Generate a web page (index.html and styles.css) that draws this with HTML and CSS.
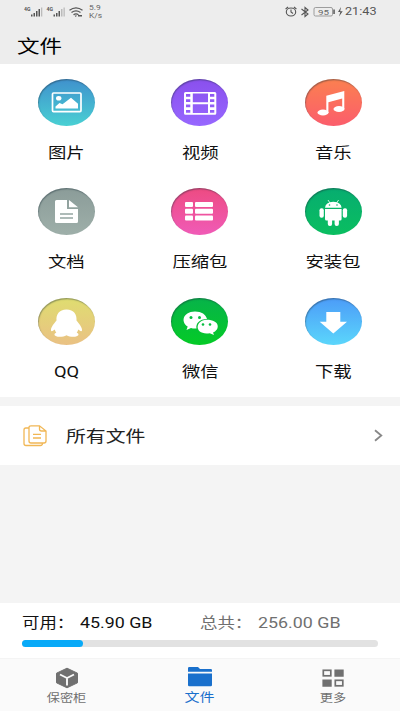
FILE: index.html
```html
<!DOCTYPE html>
<html lang="zh-CN">
<head>
<meta charset="utf-8">
<title>文件</title>
<link rel="stylesheet" href="styles.css">
</head>
<body>
<header class="header">
  <div class="status">
    <svg class="status-left" width="60" height="16" viewBox="0 0 60 16">
      <g fill="#555">
        <text x="0" y="6" class="net" textLength="6.500" lengthAdjust="spacingAndGlyphs">4G</text><text x="22.5" y="6" class="net" textLength="6.500" lengthAdjust="spacingAndGlyphs">4G</text>
        <path d="M7 9.500h1.500v2H7zM9.500 8h1.500v3.500H9.500zM12 6h1.500v5.500H12zM14.500 4h1.500v7.500h-1.500z"/>
        <path d="M29.500 9.500h1.500v2h-1.500zM32 8h1.500v3.500H32zM34.500 6h1.500v5.500h-1.500z"/>
        <path fill="#bbb" d="M17 2.500h1.300v9H17zM37 4h1.500v7.500H37zM39.500 2.500h1.300v9h-1.300z"/>
      </g>
      <g fill="none" stroke="#555" stroke-width="1.200"><path d="M45.500 5.200q6.500-4.800 13 0M47.500 7.500q4.500-3.200 9 0M49.500 9.700q2.500-1.700 5 0"/></g>
      <path fill="#555" d="M50.500 10.500h2.500l-1.200 1.500zM54 10h4v1.500h-4z"/>
    </svg>
    <div class="speed"><span>5.9</span><span>K/s</span></div>
    <svg class="status-right" width="60" height="16" viewBox="0 0 60 16">
      <g fill="none" stroke="#555" stroke-width="1.100">
        <ellipse cx="6" cy="8" rx="4.700" ry="4"/><path d="M6 5.500V8l2 1.500M.6 5l2.500-2M11.400 5L8.900 3"/>
        <path d="M16.500 5l6.500 5-3 2.500v-9L23 6l-6.500 5"/>
        <rect x="29" y="3.500" width="18.500" height="8.500" rx="1.500" stroke="#888" stroke-width=".8"/>
      </g>
      <path fill="#555" d="M48.300 5.500h1.500v4.500h-1.500zM56 3l-3 5h2.300L54 12.500l3.700-5.300h-2.500z"/>
      <text x="33" y="10.500" class="battery" textLength="11" lengthAdjust="spacingAndGlyphs">95</text>
    </svg>
    <span class="clock">21:43</span>
  </div>
  <h1 class="title">文件</h1>
</header>

<main>
  <section class="grid">
    <div class="cell">
      <div class="disc image"><svg width="57" height="47" viewBox="0 0 57 47">
        <rect x="14.500" y="14" width="28.500" height="18.600" rx="1" fill="none" stroke="#fff" stroke-width="1.700"/>
        <ellipse cx="20.700" cy="19.300" rx="2.700" ry="2.300" fill="#fff"/><path fill="#fff" d="M17.500 29.500v-2l4-3.500 3 1.300 8.500-6.500 7 6v4.700z"/></svg></div>
      <span class="label">图片</span>
    </div>
    <div class="cell">
      <div class="disc video"><svg width="57" height="47" viewBox="0 0 57 47">
        <path fill="#fff" fill-rule="evenodd" d="M14.500 13h29.300q1.500 0 1.500 1.500v19.800q0 1.500-1.500 1.500H14.500q-1.500 0-1.500-1.500V14.500q0-1.500 1.500-1.500zM21.800 14.500v8.800H37v-8.800zM21.800 25.200v8.700H37v-8.700zM15 15v2.700h4.300V15zM15 20.300V23h4.300v-2.700zM15 25.600v2.700h4.300v-2.700zM15 31v2.700h4.300V31zM39 15v2.700h4.300V15zM39 20.300V23h4.300v-2.700zM39 25.600v2.700h4.300v-2.700zM39 31v2.700h4.300V31z"/></svg></div>
      <span class="label">视频</span>
    </div>
    <div class="cell">
      <div class="disc music"><svg width="57" height="47" viewBox="0 0 57 47">
        <path fill="#fff" d="M21.300 16.700l18-4.700v18h-2.100V19.600l-13.800 3.600V34h-2.100z"/><ellipse cx="18" cy="33.500" rx="5.500" ry="3" fill="#fff"/><ellipse cx="34" cy="30" rx="5.500" ry="3" fill="#fff"/></svg></div>
      <span class="label">音乐</span>
    </div>
    <div class="cell">
      <div class="disc document"><svg width="57" height="47" viewBox="0 0 57 47">
        <path fill="#fff" d="M18.500 12H29v9h11v12.500q0 1.500-1.500 1.500h-20Q17 35 17 33.500v-20q0-1.500 1.500-1.500zM31 12l9 7.300h-9z"/><path stroke="#94a5a1" stroke-width="1.300" d="M22 26h13M22 30h13"/></svg></div>
      <span class="label">文档</span>
    </div>
    <div class="cell">
      <div class="disc archive"><svg width="57" height="47" viewBox="0 0 57 47">
        <g fill="#fff"><rect x="14" y="14" width="8" height="5" rx="1"/><rect x="24" y="14" width="18" height="5" rx="1"/><rect x="14" y="20.700" width="8" height="5" rx="1"/><rect x="24" y="20.700" width="18" height="5" rx="1"/><rect x="14" y="27.400" width="8" height="5" rx="1"/><rect x="24" y="27.400" width="18" height="5" rx="1"/></g></svg></div>
      <span class="label">压缩包</span>
    </div>
    <div class="cell">
      <div class="disc android"><svg width="57" height="47" viewBox="0 0 57 47">
        <g fill="#fff"><path d="M20 19.700q.5-5.700 8.300-6 7.800.3 8.300 6zM20 20.900h16.600v10q0 1.500-1.500 1.500H21.500q-1.500 0-1.500-1.500z"/><rect x="14.500" y="20.300" width="4.300" height="9.500" rx="2"/><rect x="37.800" y="20.300" width="4.300" height="9.500" rx="2"/><rect x="22.800" y="30" width="4.300" height="8" rx="2"/><rect x="29.600" y="30" width="4.300" height="8" rx="2"/></g>
        <path d="M23 12l2 3M33.600 12l-2 3" stroke="#fff" stroke-width=".8"/><circle cx="24.500" cy="17" r=".8" fill="#09b66a"/><circle cx="32" cy="17" r=".8" fill="#09b66a"/></svg></div>
      <span class="label">安装包</span>
    </div>
    <div class="cell">
      <div class="disc qq"><svg width="57" height="47" viewBox="0 0 57 47">
        <path fill="#fff" d="M28.500 11.500c-7.500 0-10.500 5-10 11-2 2.500-6 7-5.500 10 .5 1.500 2.500 0 3.800-1 .2 1.300.8 2.200 1.500 3-3.300 1.700-2 4.200 3.200 4.300 3 0 5-.5 7-1.500 2 1 4 1.500 7 1.500 5.200-.1 6.500-2.600 3.200-4.300.7-.8 1.300-1.700 1.500-3 1.300 1 3.300 2.500 3.800 1 .5-3-3.500-7.500-5.500-10 .5-6-2.500-11-10-11z"/></svg></div>
      <span class="label">QQ</span>
    </div>
    <div class="cell">
      <div class="disc wechat"><svg width="57" height="47" viewBox="0 0 57 47">
        <path fill="#fff" d="M24 13.500c6.500 0 11 3 12 7.500-7.500 0-11.500 4.500-10.500 9.500-2 .2-4 0-5.500-.5L15.500 32l1.200-3.500C10 24.500 11 14 24 13.500z"/>
        <path fill="#fff" d="M35.500 21.800c14 0 13.500 10.200 6.500 12.700l1 2.600-4.300-1.900C23.500 37.500 23 22.800 35.500 21.800z"/>
        <g fill="#06bd40"><circle cx="20" cy="19.500" r="1.500"/><circle cx="28.500" cy="19.500" r="1.500"/><circle cx="32" cy="26.500" r="1.300"/><circle cx="39" cy="26.500" r="1.300"/></g></svg></div>
      <span class="label">微信</span>
    </div>
    <div class="cell">
      <div class="disc download"><svg width="57" height="47" viewBox="0 0 57 47">
        <path fill="#fff" d="M21.300 14h14v9.800H42L28.300 35.500 14.700 23.800h6.600z"/></svg></div>
      <span class="label">下载</span>
    </div>
  </section>

  <section class="all-files">
    <svg width="24" height="22" viewBox="0 0 24 22" fill="none" stroke="#f1b755" stroke-width="1.300">
      <path d="M8 .8h8.500L23 6v10q0 2-2 2H8q-2 0-2-2V2.800q0-2 2-2zM16.500.8V4q0 2 2 2H23M6 3H2.800Q1 3 1 5v13.500q0 2 2 2h14.500q2 0 2-2.500M10 9.300h8M10 13h8"/>
    </svg>
    <span class="all-label">所有文件</span>
    <svg class="chevron" width="9" height="13" viewBox="0 0 9 13" fill="none" stroke="#888" stroke-width="1.800"><path d="M1 1.200l6.300 5.300L1 11.800"/></svg>
  </section>
</main>

<section class="storage">
  <div class="figures">
    <span class="free"><span class="stretch">可用：</span></span>
    <span class="free-value"><span class="stretch">45.90 GB</span></span>
    <span class="total"><span class="stretch">总共：</span></span>
    <span class="total-value"><span class="stretch">256.00 GB</span></span>
  </div>
  <div class="bar"><div class="used"></div></div>
</section>

<nav class="tabs">
  <div class="tab">
    <svg width="24" height="22" viewBox="0 0 24 22"><path fill="#707070" stroke="#707070" stroke-linejoin="round" d="M12 1.200l10.500 5v9.600L12 20.800l-10.500-5V6.200z"/><path d="M5 7.500l7 3.500 7-3.500M12 11v7.500" fill="none" stroke="#fafafa" stroke-width="1.900"/></svg>
    <span>保密柜</span>
  </div>
  <div class="tab active">
    <svg width="24" height="22" viewBox="0 0 24 22"><path fill="#1a70cc" d="M0 1.200Q0 0 1.200 0H10l2 2h10.800Q24 2 24 3.200V4.700H0zM0 6.500h24v11.500q0 1.200-1.200 1.200H1.200Q0 19.200 0 18z"/></svg>
    <span>文件</span>
  </div>
  <div class="tab">
    <svg width="24" height="22" viewBox="0 0 24 22"><g fill="none" stroke="#707070" stroke-width="1.700"><rect x="2.300" y="3.300" width="7.500" height="5.500"/><rect x="14.300" y="13.300" width="7.500" height="5.500"/></g><path fill="#707070" d="M13.400 2.400h9.300v7.300h-9.300zM1.400 12.400h9.300v7.300H1.400z"/></svg>
    <span>更多</span>
  </div>
</nav>
</body>
</html>
```

FILE: styles.css
```css
* { box-sizing: border-box; }
body {
  margin: 0;
  width: 400px;
  height: 711px;
  overflow: hidden;
  display: flex;
  flex-direction: column;
  background: #f4f4f4;
  color: #111;
  font-family: Roboto, "Noto Sans CJK SC", sans-serif;
}
svg { display: block; flex: none; }

.header { height: 64px; background: #ededed; }
.status { height: 33px; padding: 4px 0 0 24px; display: flex; align-items: flex-start; color: #555; }
.status-left { margin-top: 1px; }
.net { font-size: 5.500px; font-weight: bold; }
.battery { font-size: 8px; fill: #666; }
.speed { display: flex; flex-direction: column; margin-left: 5px; width: 20px; font-size: 7px; line-height: 8px; color: #666; transform: scaleX(1.2); transform-origin: left; }
.status-right { margin-left: 176px; }
.clock { font-size: 11.200px; line-height: 16px; transform: scaleX(1.13); transform-origin: left; }
.title { margin: 0 0 0 17px; font-size: 18.5px; font-weight: 400; line-height: 28px; width: max-content; transform: scaleX(1.22); transform-origin: left; color: #000; }

.grid {
  height: 333px;
  padding-top: 15px;
  background: #fff;
  display: grid;
  grid-template-columns: repeat(3, 1fr);
  grid-auto-rows: 109.300px;
}
.cell { display: flex; flex-direction: column; align-items: center; }
.disc { width: 57px; height: 47px; border-radius: 50%; box-shadow: inset .7px 1.200px 1.200px rgba(30, 50, 60, .4); }
.image { background: linear-gradient(#4091cd, #49d0d3); }
.video { background: linear-gradient(#8a50ed, #9767ff); }
.music { background: linear-gradient(#fb8050, #fb5d6c); }
.document { background: linear-gradient(#8b9c99, #9eafa9); }
.archive { background: linear-gradient(#ed4b82, #f05bb7); }
.android { background: linear-gradient(#07ad70, #0abe60); }
.qq { background: linear-gradient(#dfdd70, #eac184); }
.wechat { background: linear-gradient(#07b34a, #04cb26); }
.download { background: linear-gradient(#4c9cf8, #5bd6fb); }
.label { margin-top: 16px; font-size: 15.300px; line-height: 23px; transform: scaleX(1.2); color: #111; }

.all-files { margin-top: 9px; height: 59px; padding: 0 17px 0 23px; background: #fff; display: flex; align-items: center; }
.all-label { margin: 2px 0 0 18.500px; font-size: 16.300px; line-height: 24px; transform: scaleX(1.22); transform-origin: left; color: #222; }
.chevron { margin-left: auto; }

.storage { margin-top: auto; height: 55px; padding: 10px 22px 0; background: #fff; }
.figures { height: 22px; display: grid; grid-template-columns: 58px 120px 58px 1fr; line-height: 21px; font-size: 14.500px; }
.stretch { display: inline-block; white-space: nowrap; transform: scaleX(1.2); transform-origin: left; }
.free-value .stretch, .total-value .stretch { transform: scaleX(1.230); }
.total, .total-value { color: #707070; }
.bar { margin-top: 5px; height: 7px; border-radius: 4px; background: #e2e2e2; }
.used { width: 61px; height: 7px; border-radius: 4px; background: #08aaf8; }

.tabs { height: 53px; background: #fafafa; border-top: 1px solid #f4f4f4; display: grid; grid-template-columns: repeat(3, 1fr); }
.tab { display: flex; flex-direction: column; align-items: center; padding-top: 8px; color: #707070; font-size: 11px; line-height: 20px; }
.tab span { transform: scaleX(1.2); }
.active { color: #1a70cc; font-size: 12.500px; line-height: 18px; }
```
